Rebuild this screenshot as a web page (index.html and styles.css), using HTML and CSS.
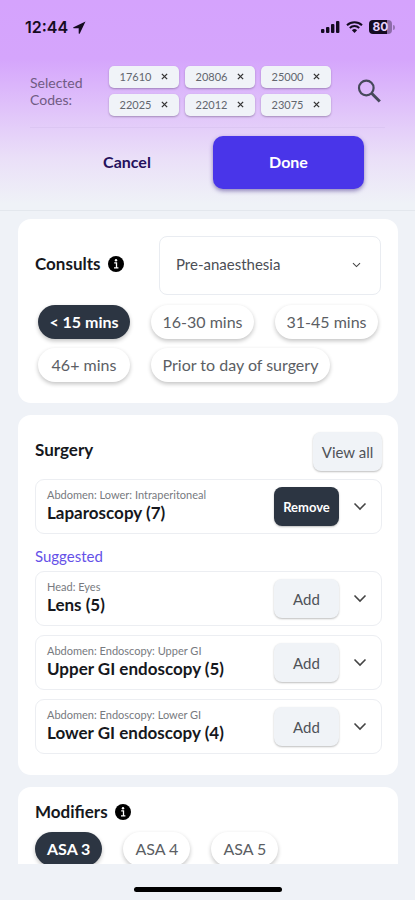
FILE: index.html
```html
<!DOCTYPE html>
<html lang="en">
<head>
<meta charset="utf-8">
<meta name="viewport" content="width=device-width, initial-scale=1">
<title>Select codes</title>
<link rel="stylesheet" href="styles.css">
</head>
<body>
<svg class="defs" aria-hidden="true">
  <symbol id="chevron" viewBox="0 0 14 9"><path d="M1.5 1.5 7 7l5.5-5.5" fill="none" stroke="currentColor" stroke-width="1.6"/></symbol>
  <symbol id="info" viewBox="0 0 16 16"><circle cx="8" cy="8" r="8" fill="#000"/><circle cx="8" cy="4.3" r="1.2" fill="#fff"/><path d="M6.2 6.8h2.3v4.6M6 11.8h4.4" fill="none" stroke="#fff" stroke-width="1.3"/></symbol>
  <symbol id="close" viewBox="0 0 8 8"><path d="M1 1l6 6M7 1L1 7" fill="none" stroke="currentColor" stroke-width="1.5"/></symbol>
</svg>
<header class="header">
  <div class="status">
    <span class="time">12:44
      <svg width="13" height="13" viewBox="0 0 13 13"><path d="M12.5.4.5 6.2c-.6.3-.4 1 .2 1h5v5c0 .6.8.8 1.1.2z" fill="#150b20"/></svg>
    </span>
    <span class="signals">
      <svg width="19" height="12" viewBox="0 0 19 12" fill="#150b20"><rect y="8" width="3.4" height="4" rx="1"/><rect x="5" y="6" width="3.4" height="6" rx="1"/><rect x="10" y="3" width="3.4" height="9" rx="1"/><rect x="15" width="3.4" height="12" rx="1"/></svg>
      <svg width="17" height="12" viewBox="0 0 17 12"><path d="M1 4.2a10.8 10.8 0 0 1 15 0M3.8 7a6.8 6.8 0 0 1 9.4 0" fill="none" stroke="#150b20" stroke-width="2"/><path d="M8.5 12 5.9 9.3a3.8 3.8 0 0 1 5.2 0z" fill="#150b20"/></svg>
      <span class="battery"><span class="level">80</span></span>
    </span>
  </div>
  <div class="codes">
    <span class="codes-label">Selected Codes:</span>
    <div class="chips">
      <button class="chip">17610 <svg><use href="#close"/></svg></button>
      <button class="chip">20806 <svg><use href="#close"/></svg></button>
      <button class="chip">25000 <svg><use href="#close"/></svg></button>
      <button class="chip">22025 <svg><use href="#close"/></svg></button>
      <button class="chip">22012 <svg><use href="#close"/></svg></button>
      <button class="chip">23075 <svg><use href="#close"/></svg></button>
    </div>
    <button class="search" aria-label="Search">
      <svg width="24" height="24" viewBox="0 0 24 24" fill="none" stroke="#46495a" stroke-width="2.2"><circle cx="9.3" cy="9" r="7.3"/><path d="M14.6 14.3 22.8 22.5" stroke-width="3"/></svg>
    </button>
  </div>
  <div class="actions">
    <button class="cancel">Cancel</button>
    <button class="done">Done</button>
  </div>
</header>
<main class="content">
  <section class="card consults">
    <div class="card-head">
      <h2><label for="consult">Consults</label> <svg class="info"><use href="#info"/></svg></h2>
      <div class="select">
        <select id="consult"><option>Pre-anaesthesia</option></select>
        <svg class="caret"><use href="#chevron"/></svg>
      </div>
    </div>
    <div class="pills durations">
      <button class="pill selected">&lt; 15 mins</button>
      <button class="pill">16-30 mins</button>
      <button class="pill">31-45 mins</button>
      <button class="pill">46+ mins</button>
      <button class="pill wide">Prior to day of surgery</button>
    </div>
  </section>
  <section class="card surgery">
    <div class="card-head">
      <h2>Surgery</h2>
      <button class="soft view">View all</button>
    </div>
    <article class="item">
      <div class="item-text"><p>Abdomen: Lower: Intraperitoneal</p><h3>Laparoscopy (7)</h3></div>
      <button class="soft remove">Remove</button>
      <button class="expand" aria-label="Expand"><svg><use href="#chevron"/></svg></button>
    </article>
    <h4>Suggested</h4>
    <div class="items">
      <article class="item">
        <div class="item-text"><p>Head: Eyes</p><h3>Lens (5)</h3></div>
        <button class="soft">Add</button>
        <button class="expand" aria-label="Expand"><svg><use href="#chevron"/></svg></button>
      </article>
      <article class="item">
        <div class="item-text"><p>Abdomen: Endoscopy: Upper GI</p><h3>Upper GI endoscopy (5)</h3></div>
        <button class="soft">Add</button>
        <button class="expand" aria-label="Expand"><svg><use href="#chevron"/></svg></button>
      </article>
      <article class="item">
        <div class="item-text"><p>Abdomen: Endoscopy: Lower GI</p><h3>Lower GI endoscopy (4)</h3></div>
        <button class="soft">Add</button>
        <button class="expand" aria-label="Expand"><svg><use href="#chevron"/></svg></button>
      </article>
    </div>
  </section>
  <section class="card modifiers">
    <h2>Modifiers <svg class="info"><use href="#info"/></svg></h2>
    <div class="pills">
      <button class="pill selected">ASA 3</button>
      <button class="pill">ASA 4</button>
      <button class="pill">ASA 5</button>
    </div>
  </section>
</main>
<footer class="home"><span></span></footer>
</body>
</html>
```
FILE: styles.css
```css
* { box-sizing: border-box; margin: 0; }
body {
  display: flex;
  flex-direction: column;
  height: 100vh;
  overflow: hidden;
  background: #eff2f7;
  font-family: Lato, sans-serif;
  font-size: 16px;
  color: #16181d;
}
button, select { font: inherit; color: inherit; border: 0; padding: 0; background: none; }
.defs { display: none; }

.header {
  padding: 0 30px 21px;
  border-bottom: 1px solid #e3e7ed;
  background: linear-gradient(#d5a3fd 0, #d5a5fc 28%, #e0c3fa 52%, #eadff8 75%, #eff2f7 97%);
}
.status {
  display: flex;
  justify-content: space-between;
  align-items: center;
  height: 54px;
  margin: 0 -10px 0 -5px;
}
.time, .signals { display: flex; align-items: center; gap: 5px; color: #150b20; }
.time { font: 600 16px Inter, sans-serif; }
.signals { gap: 6px; }
.battery { display: flex; align-items: center; }
.battery::after { content: ""; width: 2px; height: 5px; margin-left: 1px; border-radius: 0 2px 2px 0; background: #9875b5; }
.level {
  width: 23px;
  border-radius: 4px;
  background: linear-gradient(90deg, #150b20 80%, #8d6ba9 80%);
  color: #e6cffa;
  font: 700 12px/14px Inter, sans-serif;
  text-align: center;
}

.codes { display: flex; align-items: center; padding-top: 12px; }
.codes-label { width: 79px; font-size: 14px; line-height: 17px; color: #705b83; }
.chips { display: grid; grid-template-columns: repeat(3, 70px); gap: 6px; }
.chip {
  display: flex;
  align-items: center;
  justify-content: center;
  gap: 10px;
  height: 22px;
  padding-bottom: 1px;
  border-radius: 5px;
  background: #f0f3f8;
  box-shadow: 0 1px 2px rgb(70 50 90 / 40%);
  font-size: 11px;
  color: #62666e;
}
.chip svg { width: 7px; height: 7px; color: #333; }
.search { display: flex; margin-left: auto; margin-right: 4px; }

.actions {
  display: grid;
  grid-template-columns: 1fr 151px;
  align-items: center;
  margin-top: 11px;
  padding: 8px 21px 0 0;
  border-top: 1px solid rgb(190 170 220 / 20%);
  font-weight: 700;
}
.actions button { height: 53px; padding-bottom: 3px; }
.cancel { margin-left: 11px; color: #25105c; }
.done { border-radius: 10px; background: #4935e9; color: #fff; box-shadow: 0 2px 4px rgb(50 30 130 / 50%); }

.content { flex: 1; min-height: 0; overflow: hidden; display: flex; flex-direction: column; gap: 12px; padding: 8px 17px 0 18px; }
.card { flex: none; padding: 17px 17px 21px; border-radius: 13px; background: #fff; }
.card-head { display: flex; align-items: center; justify-content: space-between; }
h2 { display: flex; align-items: center; gap: 7px; font-size: 17px; line-height: 20px; font-weight: 700; }
.card-head h2 { padding-bottom: 3px; }
.info { width: 16px; height: 16px; }

.select { position: relative; width: 222px; }
.select select { appearance: none; width: 100%; height: 59px; padding: 0 40px 4px 16px; border: 1px solid #e9ecf1; border-radius: 8px; font-size: 15px; color: #4b4e55; }
.caret { position: absolute; right: 20px; top: 26px; width: 9px; height: 6px; color: #444; pointer-events: none; }

.pills { display: flex; gap: 21px; }
.pill {
  height: 34px;
  padding: 0 12px 2px;
  border-radius: 17px;
  background: #fff;
  box-shadow: 0 2px 4px rgb(0 0 0 / 24%);
  color: #5b5e64;
  white-space: nowrap;
}
.pill.selected { background: #2c3542; color: #fff; font-weight: 700; }
.durations { display: grid; grid-template-columns: 92px 103px 103px; gap: 9px 21px; padding: 10px 0 0 3px; }
.durations .pill { padding: 0 0 2px; }
.durations .wide { grid-column: 2 / 4; width: 179px; }

.soft {
  width: 65px;
  height: 39px;
  border-radius: 8px;
  background: #f0f3f7;
  box-shadow: 0 1px 2px rgb(0 0 0 / 26%);
  font-size: 15px;
  color: #4f5258;
}
.view { width: 69px; }
.remove { background: #2c3542; color: #fff; font-size: 13px; font-weight: 700; }
.surgery { padding-right: 16px; }
.surgery .card-head { margin-bottom: 8px; }
.items { display: grid; gap: 9px; }
.item {
  display: flex;
  align-items: center;
  height: 55px;
  padding: 0 14px 0 11px;
  border: 1px solid #eceef2;
  border-radius: 9px;
}
.item-text { flex: 1; }
.item p { font-size: 11px; line-height: 14px; color: #777a80; }
.item h3 { font-size: 17px; line-height: 21px; padding-bottom: 2px; font-weight: 700; }
.expand { display: flex; margin-left: 14px; color: #444; }
.expand svg { width: 14px; height: 9px; }
h4 { padding: 12px 0 5px; font-size: 15px; line-height: 20px; font-weight: 400; color: #6551e8; }

.modifiers { padding-top: 15px; }
.modifiers .pills { margin-top: 10px; }
.home { flex: none; display: flex; justify-content: center; align-items: center; height: 36px; padding-top: 14px; }
.home span { width: 148px; height: 5px; border-radius: 3px; background: #000; }
```
